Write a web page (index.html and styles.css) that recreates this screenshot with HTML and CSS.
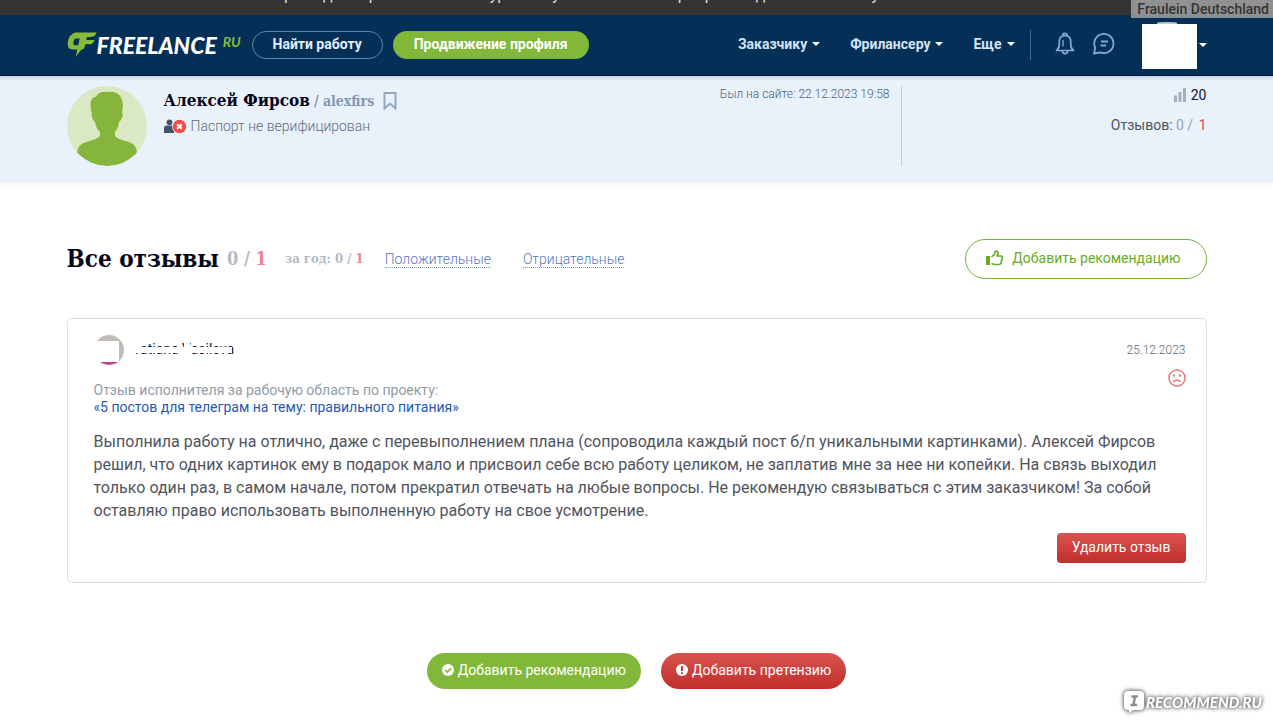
FILE: index.html
```html
<!DOCTYPE html>
<html lang="ru">
<head>
<meta charset="utf-8">
<title>Отзывы</title>
<link rel="stylesheet" href="styles.css">
</head>
<body>
<div class="strip"><p class="strip-line"><span class="s1">р</span><span class="s2">д</span><span class="s3">р</span><span class="s4">ур</span><span class="s5">у</span><span class="s6">р</span><span class="s7">р</span><span class="s8">д</span><span class="s9">у</span></p></div>
<header class="topbar">
  <div class="container topbar-row">
    <a class="logo" href="#">
      <svg class="logo-mark" viewBox="0 0 30 25" aria-hidden="true"><path fill="#86bc3a" fill-rule="evenodd" d="M8.500 0.500H29.500Q28.500 4.500 24 5H20L19.300 8H27.500Q26.500 12 22.500 12.300H18.200L17.500 15.500Q17 17.500 14.500 17.500L8.800 24.500L10.300 17.600H6Q0 17.500 .8 10.500Q2 2 8.500 .5ZM9 6.500Q7 6.700 6.500 10Q6 13.300 8 13.300H11.200L12.700 6.500Z"/></svg>
      <span class="logo-name">FREELANCE</span><span class="logo-ru">RU</span>
    </a>
    <a class="pill pill-line" href="#">Найти работу</a>
    <a class="pill pill-green" href="#">Продвижение профиля</a>
    <nav class="menu">
      <button class="menu-item" type="button">Заказчику<i class="caret"></i></button>
      <button class="menu-item" type="button">Фрилансеру<i class="caret"></i></button>
      <button class="menu-item" type="button">Еще<i class="caret"></i></button>
    </nav>
    <div class="tools">
      <button class="tool" type="button" aria-label="Уведомления"><svg width="20" height="24" viewBox="0 0 20 24" fill="none" stroke="#86a9d0" stroke-width="1.700" stroke-linejoin="round"><path d="M1.500 18.500Q4.300 16.500 4.300 12V9Q4.300 4 10 3.500Q15.700 4 15.700 9V12Q15.700 16.500 18.500 18.500Z"/><path d="M8 3.500V2.500Q8 1.300 10 1.300T12 2.500V3.500M7.500 19Q7.500 21.700 10 21.700T12.500 19"/><path d="M8 8V14.500" stroke-width="1.300"/></svg></button>
      <button class="tool" type="button" aria-label="Сообщения"><svg width="24" height="24" viewBox="0 0 24 24" fill="none" stroke="#86a9d0" stroke-width="1.800" stroke-linejoin="round"><path d="M2 21.500L3.200 15.700A9.600 9.600 0 1 1 8.200 20.400Z"/><path d="M9 9.500H16M8.500 13.500H14"/></svg></button>
      <button class="user" type="button" aria-label="Профиль"><span class="user-photo"></span><i class="caret"></i></button>
    </div>
  </div>
</header>
<div class="owner">Fraulein Deutschland</div>

<section class="profile">
  <div class="container profile-row">
    <svg class="avatar" viewBox="0 0 80 80" aria-hidden="true"><defs><clipPath id="round"><circle cx="40" cy="40" r="40"/></clipPath></defs><g clip-path="url(#round)"><rect width="80" height="80" fill="#dae9c4"/><path fill="#85b53b" d="M24 24Q22 14 27 11Q29 12 31 8Q35 5 41 6Q55 4 56 20L55 27Q57 28 54 34L52 36Q51 43 48 46V50Q50 53 62 56Q70 59 70 67L66 72Q54 80 40 80Q24 80 10 67Q10 59 19 56Q31 53 33 50V46Q29 42 28 36L26 34Q24 29 25 28Z"/></g></svg>
    <div class="person">
      <h1 class="person-name">Алексей Фирсов <small>/ alexfirs</small><button class="mark" type="button" aria-label="В закладки"><svg width="14" height="18" viewBox="0 0 14 18"><path d="M1.500 1H12.500V16.500L7 11.500L1.500 16.500Z" fill="none" stroke="#92a6bd" stroke-width="1.900"/></svg></button></h1>
      <p class="passport"><svg width="23" height="15" viewBox="0 0 23 15" aria-hidden="true"><circle cx="5.500" cy="3.300" r="2.900" fill="#475069"/><path d="M0 14V9Q0 6.500 3 6.500H10V14Z" fill="#475069"/><circle cx="15.500" cy="7.500" r="7.500" fill="#e9f1fb"/><circle cx="15.500" cy="7.500" r="6.700" fill="#f04b4d"/><path d="M13.200 5.200L17.800 9.800M17.800 5.200L13.200 9.800" stroke="#fff" stroke-width="2"/></svg>Паспорт не верифицирован</p>
    </div>
    <p class="seen">Был на сайте: 22.12.2023 19:58</p>
    <div class="stats">
      <p class="rating"><svg width="12" height="14" viewBox="0 0 12 14" aria-hidden="true"><path d="M0 7.500H3V14H0ZM4.500 4H7.500V14H4.500ZM9 0H12V14H9Z" fill="#a5afc0"/></svg>20</p>
      <p class="counts">Отзывов: <span>0 /</span> <b>1</b></p>
    </div>
  </div>
</section>

<main class="container">
  <div class="heading">
    <h2 class="heading-title">Все отзывы</h2>
    <p class="total">0 / <b>1</b></p>
    <p class="year">за год: 0 / <b>1</b></p>
    <a class="filter" href="#">Положительные</a>
    <a class="filter" href="#">Отрицательные</a>
    <button class="recommend" type="button"><svg width="18" height="16" viewBox="0 0 18 16" aria-hidden="true"><path d="M0 6H4V15H0Z" fill="#67ad22"/><path d="M5.500 7L8.500 4.200L9.300 1.300Q12 .7 12 3.300L11.200 6H15Q16.500 6.200 16.300 8L15 13Q14.500 14.500 13 14.500H8L5.500 13.500" fill="none" stroke="#67ad22" stroke-width="1.700" stroke-linejoin="round"/></svg>Добавить рекомендацию</button>
  </div>

  <article class="card">
    <div class="card-top">
      <span class="author-photo"><i class="photo-cover"></i></span>
      <span class="author">Tatiana Vasileva<i class="name-cover"></i></span>
      <time class="date">25.12.2023</time>
    </div>
    <div class="card-about">
      <p class="about">Отзыв исполнителя за рабочую область по проекту:<br><a href="#">«5 постов для телеграм на тему: правильного питания»</a></p>
      <svg class="mood" width="18" height="18" viewBox="0 0 18 18" aria-label="Отрицательный отзыв"><circle cx="9" cy="9" r="8.100" fill="none" stroke="#e77878" stroke-width="1.500"/><circle cx="6" cy="6.500" r="1.200" fill="#e77878"/><circle cx="12" cy="6.500" r="1.200" fill="#e77878"/><path d="M5.500 13Q9 9 12.500 13" fill="none" stroke="#e77878" stroke-width="1.500"/></svg>
    </div>
    <p class="review">Выполнила работу на отлично, даже с перевыполнением плана (сопроводила каждый пост б/п уникальными картинками). Алексей Фирсов решил, что одних картинок ему в подарок мало и присвоил себе всю работу целиком, не заплатив мне за нее ни копейки. На связь выходил только один раз, в самом начале, потом прекратил отвечать на любые вопросы. Не рекомендую связываться с этим заказчиком! За собой оставляю право использовать выполненную работу на свое усмотрение.</p>
    <button class="delete" type="button">Удалить отзыв</button>
  </article>

  <div class="actions">
    <button class="action action-green" type="button"><svg width="12" height="12" viewBox="0 0 12 12" aria-hidden="true"><circle cx="6" cy="6" r="6" fill="#fff"/><path d="M3.200 6L5.300 8L9 4.300" fill="none" stroke="#82b83a" stroke-width="1.700"/></svg>Добавить рекомендацию</button>
    <button class="action action-red" type="button"><svg width="12" height="12" viewBox="0 0 12 12" aria-hidden="true"><circle cx="6" cy="6" r="6" fill="#fff"/><path d="M6 2V7M6 8.200V10" stroke="#c93a38" stroke-width="2"/></svg>Добавить претензию</button>
  </div>
</main>
<div class="watermark"><svg width="22" height="24" viewBox="0 0 22 24" aria-hidden="true"><path d="M5 1H17Q21 1 21 5V16Q21 20 17 20H10L6 23.500V20H5Q1 20 1 16V5Q1 1 5 1Z" fill="#fff"/><path d="M8.500 6.500H15M7.500 15H14M12 6.500L10.500 15" stroke="#8c8c8c" stroke-width="2.400"/></svg><span>RECOMMEND.RU</span></div>
</body>
</html>
```
FILE: styles.css
```css
* { box-sizing: border-box; }
body { margin: 0; background: #fff; color: #50545e; font: 14px/18px Roboto, sans-serif; overflow-x: hidden; }
p, h1, h2 { margin: 0; }
a { color: inherit; text-decoration: none; }
button { padding: 0; border: 0; background: none; font: inherit; color: inherit; cursor: pointer; }
svg { flex: none; }
.container { width: 100%; max-width: 1140px; margin: 0 auto; }

.strip { height: 15px; overflow: hidden; background: #353434; }
.strip-line { display: flex; height: 15px; margin-top: -13px; color: #ddd; font-size: 16px; line-height: 16px; }
.s1 { margin-left: 284px; }
.s2 { margin-left: 30px; }
.s3 { margin-left: 36px; }
.s4 { margin-left: 112px; }
.s5 { margin-left: 46px; }
.s6 { margin-left: 118px; }
.s7 { margin-left: 18px; }
.s8 { margin-left: 42px; }
.s9 { margin-left: 106px; }

.topbar { height: 61px; background: #042f57; border-bottom: 1px solid #00112b; }
.topbar-row { display: flex; align-items: center; height: 59px; }
.logo { display: flex; align-items: center; width: 185px; color: #fff; font-family: Lato, sans-serif; font-style: italic; }
.logo-mark { width: 30px; height: 25px; }
.logo-name { font-size: 23px; line-height: 24px; font-weight: 900; }
.logo-ru { margin: 0 0 6px 6px; font-size: 14px; font-weight: 700; color: #86bc3a; }
.pill { padding: 3px 20px 5px; border: 1px solid transparent; border-radius: 14px; font-weight: 700; color: #fff; white-space: nowrap; }
.pill-line { padding: 3px 20px 5px; border-color: #6484a6; color: #e3eefa; }
.pill-green { margin-left: 10px; background: #82b83a; }
.menu { display: flex; gap: 30px; margin-left: auto; padding: 0 15px 2px 0; }
.menu-item { display: flex; align-items: center; gap: 5px; color: #d5e2f0; font-weight: 700; }
.caret { width: 0; border: 4px solid transparent; border-top-color: #fff; border-bottom: 0; }
.tools { display: flex; align-items: center; height: 30px; padding-left: 24px; border-left: 1px solid #42668c; }
.tool { display: flex; margin: 0 17px 2px 0; }
.user { display: flex; align-items: center; gap: 2px; margin: 4px 0 0 9px; }
.user-photo { position: relative; width: 55px; height: 45px; background: #fff; }
.user-photo::before { content: ""; position: absolute; left: 15px; top: -2px; width: 20px; height: 2px; border-radius: 50% 50% 0 0; background: #bccbc0; }
.user .caret { margin-bottom: 4px; }
.owner { position: absolute; top: 0; right: 0; height: 18px; padding: 0 4px 0 6px; background: rgba(169, 169, 169, .8); color: #333; line-height: 19px; font-weight: 500; }

.profile { height: 105px; padding-top: 10px; background: linear-gradient(#c5d3e8, #e9f1fb 5px); box-shadow: 0 1px 4px rgba(70, 80, 100, .18); }
.profile-row { display: flex; }
.avatar { width: 80px; height: 80px; }
.person { margin-left: 17px; }
.person-name { display: flex; align-items: baseline; gap: 4px; color: #050519; font: bold 17px/28px "DejaVu Serif Condensed", "DejaVu Serif", serif; }
.person-name small { color: #8398af; font-size: 14px; }
.mark { align-self: center; margin-left: 5px; height: 18px; display: flex; }
.passport { display: flex; align-items: center; gap: 4px; line-height: 22px; font-weight: 300; color: #626a80; }
.seen { margin-left: auto; padding-right: 11px; border-right: 1px solid #c4cddb; font-size: 12px; line-height: 16px; font-weight: 300; color: #48617e; }
.stats { width: 305px; text-align: right; }
.rating { display: flex; justify-content: flex-end; align-items: center; gap: 5px; line-height: 18px; color: #14142b; }
.counts { margin-top: 12px; }
.counts span { color: #94a3b8; }
.counts b { margin-left: 2px; font-weight: 400; color: #ee4455; }

.heading { display: flex; align-items: center; margin-top: 58px; }
.heading-title { color: #050519; font: bold 24px/36px "DejaVu Serif Condensed", "DejaVu Serif", serif; }
.total, .year { margin-left: 8px; color: #b0bbc5; font: bold 18px/24px "DejaVu Serif Condensed", "DejaVu Serif", serif; }
.total b, .year b { color: #ef7f8c; }
.year { margin-left: 18px; font-size: 13px; }
.filter { margin-left: 21px; border-bottom: 1px dotted #7595cf; font-weight: 300; line-height: 16px; color: #5678bf; }
.filter + .filter { margin-left: 32px; }
.recommend { display: flex; align-items: center; gap: 8px; height: 40px; margin-left: auto; padding: 0 25px 2px 20px; border: 1px solid #72b534; border-radius: 20px; color: #67ad22; }

.card { display: flex; flex-direction: column; margin-top: 39px; padding: 16px 20px 19px 26px; border: 1px solid #dfdfe1; border-radius: 5px; }
.card-top { display: flex; align-items: center; }
.author-photo { position: relative; width: 30px; height: 30px; border-radius: 50%; background: linear-gradient(#c2bdb6 80%, #ba4a91 90%); }
.photo-cover { position: absolute; inset: 6px 5px 3px -1px; background: #fff; }
.author { position: relative; margin-left: 9px; padding-bottom: 2px; color: #14142b; }
.name-cover { position: absolute; inset: 7px 2px 7px -1px; background: #fff; }
.name-cover::before { content: ""; position: absolute; left: 0; top: -5px; width: 10px; height: 6px; background: #fff; }
.name-cover::after { content: ""; position: absolute; left: 52px; top: -5px; width: 6px; height: 15px; background: #fff; }
.date { margin-left: auto; font-size: 12px; font-weight: 300; color: #5e6678; }
.card-about { display: flex; justify-content: space-between; margin-top: 4px; }
.about { margin-top: 13px; line-height: 17px; color: #909baa; }
.about a { color: #2459b5; }
.review { margin-top: 14px; font-size: 16px; line-height: 23px; }
.delete { align-self: flex-end; height: 30px; margin-top: 11px; padding: 0 15px 2px; border-radius: 4px; background: linear-gradient(#d9534f, #c12e2a); color: #fff; }

.actions { display: flex; justify-content: center; gap: 20px; margin-top: 70px; }
.action { display: flex; align-items: center; gap: 4px; height: 36px; padding: 0 15px 2px; border-radius: 18px; color: #fff; }
.action-green { background: #82b83a; }
.action-red { background: linear-gradient(#d9534f, #c12e2a); }
.watermark { position: absolute; top: 690px; right: 11px; display: flex; align-items: center; gap: 1px; color: #fff; font: italic 900 15px/24px Lato, sans-serif; filter: drop-shadow(0 0 2px #777) drop-shadow(0 0 1px #888); }
```
